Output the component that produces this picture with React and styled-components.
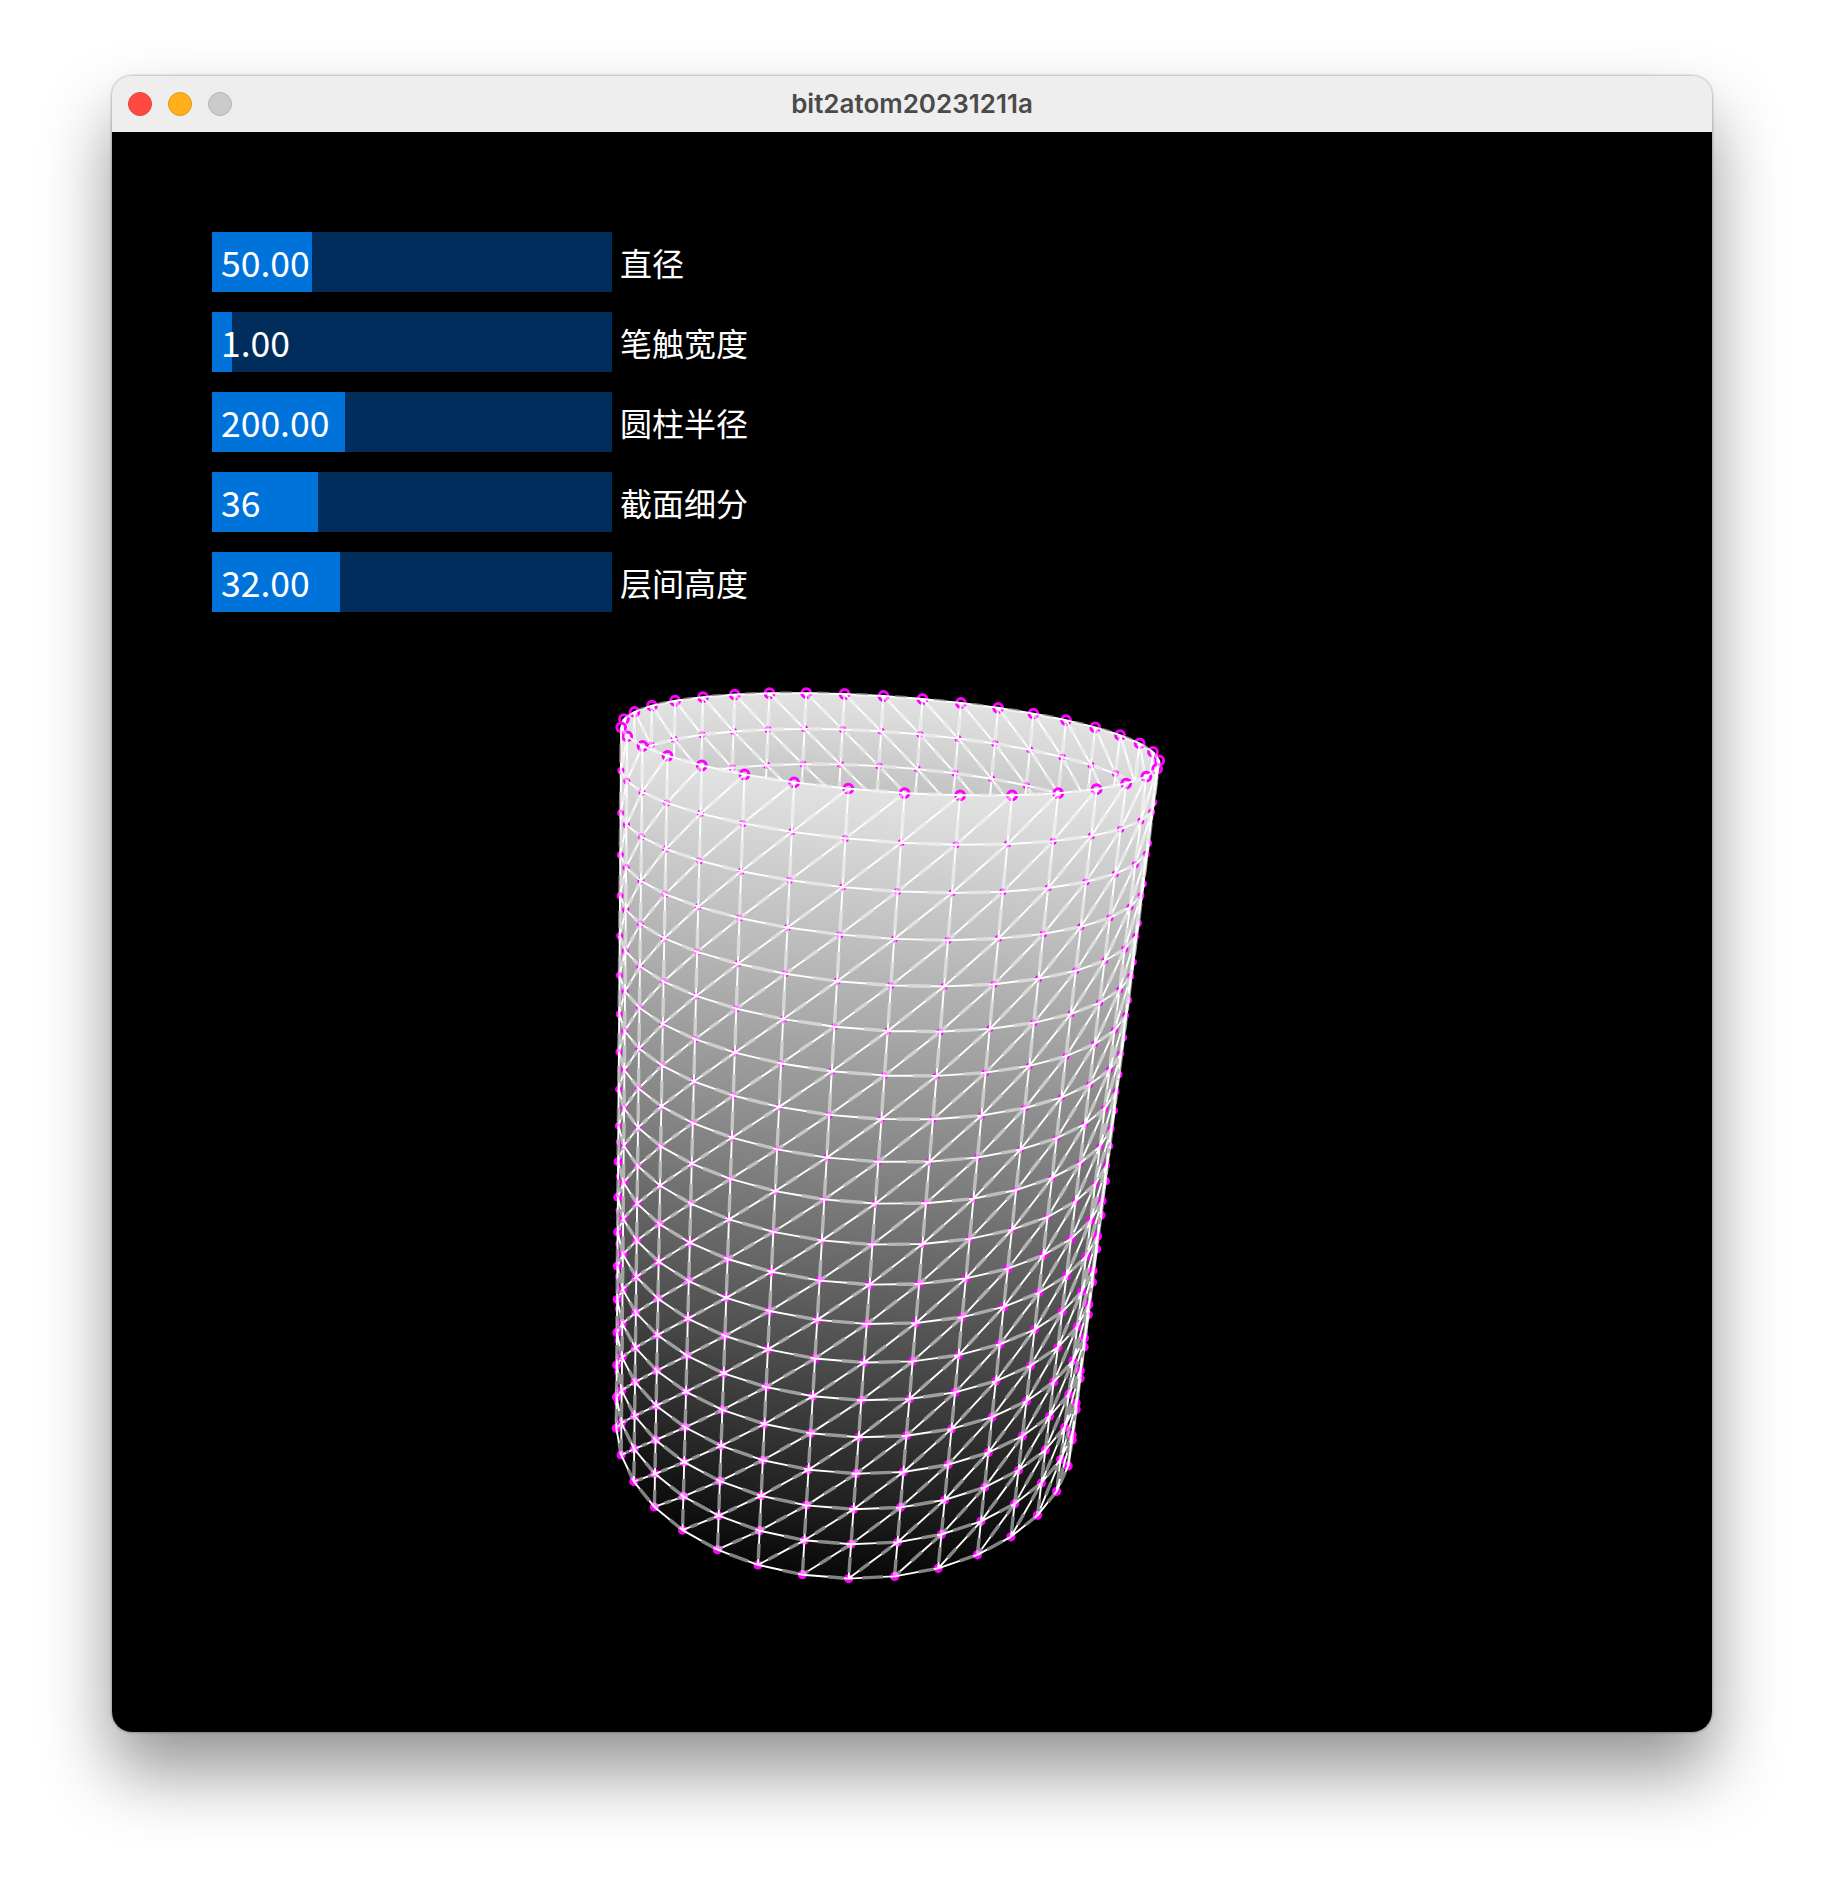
import React, { useMemo } from "react";
import styled, { createGlobalStyle } from "styled-components";

const GlobalStyle = createGlobalStyle`
  html, body {
    margin: 0;
    padding: 0;
    background: #fff;
  }
`;

const SLIDERS = [
  { value: "50.00", ratio: 50 / 200, label: "直径" },
  { value: "1.00", ratio: 1 / 20, label: "笔触宽度" },
  { value: "200.00", ratio: 200 / 600, label: "圆柱半径" },
  { value: "36", ratio: 36 / 136, label: "截面细分" },
  { value: "32.00", ratio: 32 / 100, label: "层间高度" },
];

// camera values fitted to the picture (default processing camera, 60deg fov, retina)
const FOCAL = 1386;
const CX = 912;
const CY = 932;
const RADIUS = 200;
const SECTIONS = 36;
const LAYERS = 19;
const TOP = [-15, -148, 1045];
const BOTTOM = [-58, 423, 1230];
const PHASE = 87;

const dot = (a, b) => a[0] * b[0] + a[1] * b[1] + a[2] * b[2];
const norm = (a) => {
  const l = Math.sqrt(dot(a, a));
  return [a[0] / l, a[1] / l, a[2] / l];
};
const cross = (a, b) => [
  a[1] * b[2] - a[2] * b[1],
  a[2] * b[0] - a[0] * b[2],
  a[0] * b[1] - a[1] * b[0],
];

const AXIS = norm([TOP[0] - BOTTOM[0], TOP[1] - BOTTOM[1], TOP[2] - BOTTOM[2]]);
const U = norm([1 - AXIS[0] * AXIS[0], -AXIS[0] * AXIS[1], -AXIS[0] * AXIS[2]]);
const V = cross(U, AXIS);

const centre = (k) => [0, 1, 2].map((n) => BOTTOM[n] + ((TOP[n] - BOTTOM[n]) * k) / LAYERS);

const world = (i, k) => {
  const t = ((PHASE - i * (360 / SECTIONS)) * Math.PI) / 180;
  const c = Math.cos(t) * RADIUS;
  const s = Math.sin(t) * RADIUS;
  const m = centre(k);
  return [0, 1, 2].map((n) => m[n] + U[n] * c + V[n] * s);
};

const project = (p) => [CX + (FOCAL * p[0]) / p[2], CY + (FOCAL * p[1]) / p[2]];
const f1 = (n) => n.toFixed(1);
const shade = (k) => Math.round(8 + (226 - 8) * (k / LAYERS));
const grey = (k) => {
  const s = shade(k);
  return `rgb(${s},${s},${s})`;
};

const seg = (a, b, from, to) => {
  const x1 = a[0] + (b[0] - a[0]) * from;
  const y1 = a[1] + (b[1] - a[1]) * from;
  const x2 = a[0] + (b[0] - a[0]) * to;
  const y2 = a[1] + (b[1] - a[1]) * to;
  return `M${f1(x1)} ${f1(y1)}L${f1(x2)} ${f1(y2)}`;
};

// a wire is never one colour: thin white and thick pale stretches take turns
const addWire = (group, a, b, stops, softFirst) => {
  let soft = softFirst;
  for (let n = 0; n < stops.length - 1; n++) {
    const d = seg(a, b, stops[n], stops[n + 1]);
    if (soft) group.soft += d;
    else group.white += d;
    soft = !soft;
  }
};

const buildMesh = () => {
  const groups = {
    back: { faces: [], white: "", soft: "", dots: [] },
    front: { faces: [], white: "", soft: "", dots: [] },
  };

  for (let i = 0; i < SECTIONS; i++) {
    for (let k = 0; k < LAYERS; k++) {
      const w = world(i + 0.5, k + 0.5);
      const m = centre(k + 0.5);
      const out = [w[0] - m[0], w[1] - m[1], w[2] - m[2]];
      const group = dot(out, w) < 0 ? groups.front : groups.back;

      const a = project(world(i, k));
      const b = project(world(i + 1, k));
      const c = project(world(i + 1, k + 1));
      const d = project(world(i, k + 1));

      group.faces.push({
        id: `q${i}_${k}`,
        k,
        points: [a, b, c, d].map((p) => `${f1(p[0])},${f1(p[1])}`).join(" "),
        x1: (a[0] + b[0]) / 2,
        y1: (a[1] + b[1]) / 2,
        x2: (c[0] + d[0]) / 2,
        y2: (c[1] + d[1]) / 2,
      });

      const odd = (i + k) % 2 === 0;
      addWire(group, a, d, odd ? [0, 0.18, 0.62, 1] : [0, 0.5, 0.9, 1], !odd);
      addWire(group, a, b, (i + k) % 3 === 0 ? [0, 0.3, 0.75, 1] : [0, 0.55, 0.9, 1], false);
      addWire(group, a, c, odd ? [0, 0.22, 0.42, 0.68, 0.86, 1] : [0, 0.12, 0.36, 0.58, 0.8, 1], !odd);
      if (k === LAYERS - 1) addWire(group, d, c, [0, 0.4, 0.7, 1], false);

      group.dots.push({ x: a[0], y: a[1], k });
      if (k === LAYERS - 1) group.dots.push({ x: d[0], y: d[1], k: LAYERS });
    }
  }
  return groups;
};

const MeshLayer = ({ group }) => (
  <g>
    {group.faces.map((f) => (
      <polygon key={f.id} points={f.points} fill={`url(#${f.id})`} stroke={`url(#${f.id})`} strokeWidth="0.6" />
    ))}
    {group.dots.map((d) =>
      d.k === LAYERS ? (
        <circle key={`${d.x}-${d.y}`} cx={d.x} cy={d.y} r="4.4" fill="none" stroke="#ff00ff" strokeWidth="3" />
      ) : (
        <circle key={`${d.x}-${d.y}`} cx={d.x} cy={d.y} r={d.k < 9 ? 4.6 : 3.5} fill="#ff00ff" />
      )
    )}
    <path d={group.soft} stroke="#fff" strokeOpacity="0.5" strokeWidth="3.4" fill="none" />
    <path d={group.white} stroke="#fff" strokeWidth="1.9" fill="none" />
  </g>
);

const CylinderMesh = () => {
  const mesh = useMemo(buildMesh, []);
  const faces = [...mesh.back.faces, ...mesh.front.faces];
  return (
    <MeshSvg viewBox="112 132 1600 1600">
      <defs>
        {faces.map((f) => (
          <linearGradient key={f.id} id={f.id} gradientUnits="userSpaceOnUse" x1={f.x1} y1={f.y1} x2={f.x2} y2={f.y2}>
            <stop offset="0" stopColor={grey(f.k)} />
            <stop offset="1" stopColor={grey(f.k + 1)} />
          </linearGradient>
        ))}
      </defs>
      <MeshLayer group={mesh.back} />
      <MeshLayer group={mesh.front} />
    </MeshSvg>
  );
};

const App = () => (
  <Page>
    <GlobalStyle />
    <Window>
      <TitleBar>
        <Lights>
          <Light $color="#ff4a44" $edge="#e0403a" />
          <Light $color="#ffb01a" $edge="#dd9616" />
          <Light $color="#cbcbcb" $edge="#b4b4b4" />
        </Lights>
        <Title>bit2atom20231211a</Title>
      </TitleBar>
      <Canvas>
        <CylinderMesh />
        <Panel>
          {SLIDERS.map((s) => (
            <Row key={s.label}>
              <Track>
                <Fill style={{ width: `${s.ratio * 100}%` }} />
                <Value>{s.value}</Value>
              </Track>
              <Label>{s.label}</Label>
            </Row>
          ))}
        </Panel>
      </Canvas>
    </Window>
  </Page>
);

const Page = styled.div`
  width: 1824px;
  height: 1880px;
  box-sizing: border-box;
  padding: 76px 112px 0;
  overflow: hidden;
`;

const Window = styled.div`
  width: 1600px;
  border-radius: 20px;
  overflow: hidden;
  box-shadow: 0 40px 70px rgba(0, 0, 0, 0.42), 0 0 3px rgba(0, 0, 0, 0.45);
`;

const TitleBar = styled.div`
  position: relative;
  height: 56px;
  display: flex;
  align-items: center;
  justify-content: center;
  background: #eeeeee;
`;

const Lights = styled.div`
  position: absolute;
  left: 16px;
  top: 16px;
  display: flex;
  gap: 16px;
`;

const Light = styled.span`
  width: 24px;
  height: 24px;
  box-sizing: border-box;
  border-radius: 50%;
  background: ${(p) => p.$color};
  border: 1px solid ${(p) => p.$edge};
`;

const Title = styled.div`
  margin-top: -2px;
  font: 600 26px Inter, "Liberation Sans", sans-serif;
  color: #4a4a4a;
`;

const Canvas = styled.div`
  position: relative;
  height: 1600px;
  box-sizing: border-box;
  padding: 100px 100px 0;
  background: #000;
`;

const MeshSvg = styled.svg`
  position: absolute;
  inset: 0;
  width: 1600px;
  height: 1600px;
`;

const Panel = styled.div`
  position: relative;
  display: flex;
  flex-direction: column;
  gap: 20px;
`;

const Row = styled.div`
  display: flex;
  align-items: center;
  gap: 8px;
  height: 60px;
`;

const Track = styled.div`
  position: relative;
  width: 400px;
  height: 60px;
  background: #002d5c;
`;

const Fill = styled.div`
  height: 100%;
  background: #0073db;
`;

const Value = styled.span`
  position: absolute;
  left: 9px;
  top: 0;
  font: 35.5px/60px "Noto Sans CJK SC", "Noto Sans", sans-serif;
  color: #fff;
`;

const Label = styled.span`
  font: 32px/64px "Noto Sans CJK SC", sans-serif;
  color: #fff;
`;

export default App;
